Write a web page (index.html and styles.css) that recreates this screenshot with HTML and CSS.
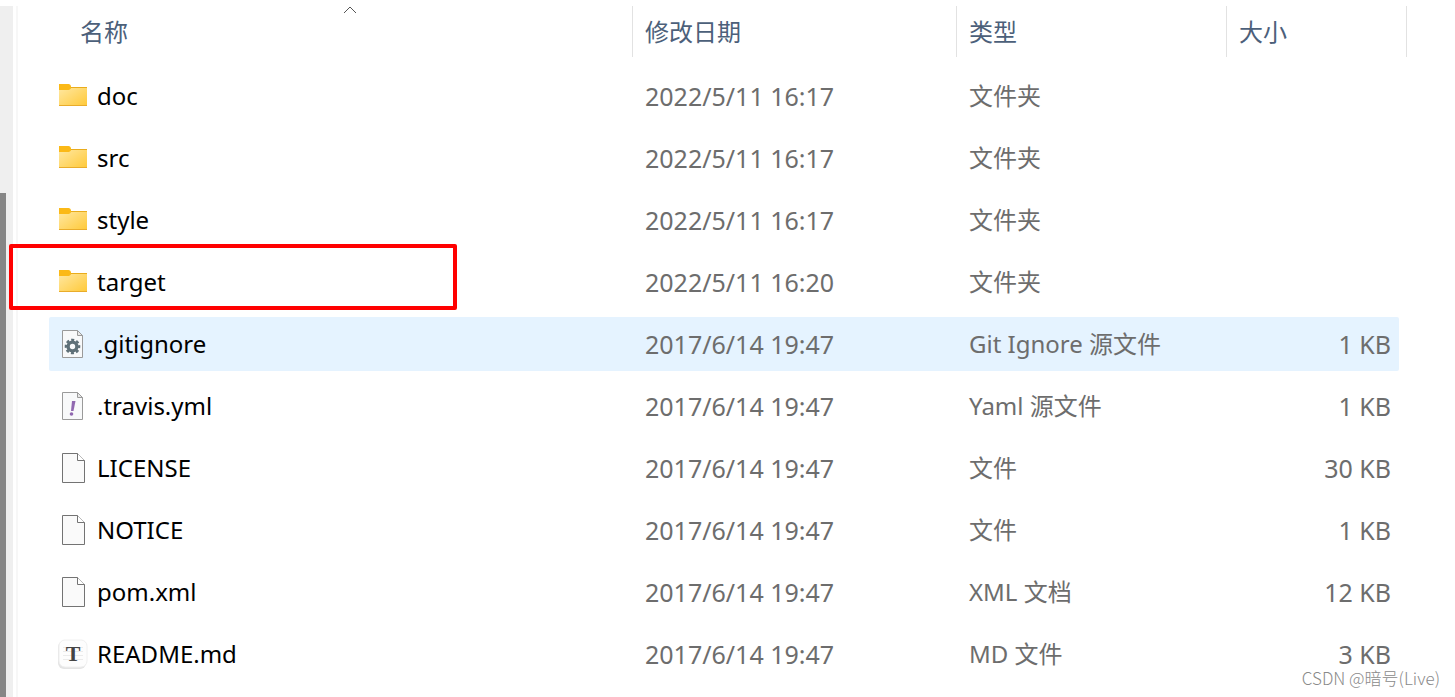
FILE: index.html
```html
<!DOCTYPE html>
<html lang="zh-CN">
<head>
  <meta charset="UTF-8" />
  <meta name="viewport" content="width=device-width, initial-scale=1" />
  <title>文件</title>
  <link rel="stylesheet" href="styles.css">
</head>
<body>

  <svg class="defs" aria-hidden="true">
    <defs>
      <linearGradient id="folder-fill" x1="0" y1="0" x2="1" y2="1">
        <stop offset="0" stop-color="#ffe8a3" />
        <stop offset="1" stop-color="#ffc938" />
      </linearGradient>
      <symbol id="icon-folder" viewBox="0 0 30 30">
        <path d="M1 3h9q1 0 3 3l-3 3H1z" fill="#fbb917" />
        <path d="M1 9h9l3-3h16v18q0 1-1 1H2q-1 0-1-1z" fill="url(#folder-fill)" />
        <path d="M1 8.500h9l3-2h16" fill="none" stroke="#e9ac1c" />
        <path d="M1 24.500h28" stroke="#e9ac2b" />
        <path d="M1 3h9q3 0 3 3t-3 3H1z" fill="#fbb917" />
      </symbol>
      <symbol id="icon-file" viewBox="0 0 30 30">
        <path d="M4.500.500h15l7 7v22h-22z" fill="#fafafa" stroke="#737373" />
        <path d="M19.500.500v7h7" fill="#fff" stroke="#737373" />
      </symbol>
      <symbol id="icon-source" viewBox="0 0 30 30">
        <path d="M4.500 1.500h15l5 5v22h-20z" fill="#f8f9fa" stroke="#9a9a9a" />
        <path d="M19.500 1.500v5h5z" fill="#e8e8e8" stroke="#9a9a9a" />
      </symbol>
    </defs>
  </svg>

  <div class="explorer">
    <div class="scrollbar"><div class="thumb"></div></div>

    <main class="files">
      <table>
        <thead>
          <tr>
            <th class="col-name">
              <div class="head">
                名称
                <svg class="sort" width="14" height="8" viewBox="0 0 14 8"><path d="M1 7l6-6 6 6" fill="none" stroke="#555" /></svg>
              </div>
            </th>
            <th class="col-date"><div class="head">修改日期</div></th>
            <th class="col-type"><div class="head">类型</div></th>
            <th class="col-size"><div class="head">大小</div></th>
          </tr>
        </thead>
        <tbody>
          <tr>
            <td><div class="name"><svg class="icon"><use href="#icon-folder" /></svg>doc</div></td>
            <td class="date">2022/5/11 16:17</td>
            <td>文件夹</td>
            <td class="size"></td>
          </tr>
          <tr>
            <td><div class="name"><svg class="icon"><use href="#icon-folder" /></svg>src</div></td>
            <td class="date">2022/5/11 16:17</td>
            <td>文件夹</td>
            <td class="size"></td>
          </tr>
          <tr>
            <td><div class="name"><svg class="icon"><use href="#icon-folder" /></svg>style</div></td>
            <td class="date">2022/5/11 16:17</td>
            <td>文件夹</td>
            <td class="size"></td>
          </tr>
          <tr>
            <td><div class="name"><svg class="icon"><use href="#icon-folder" /></svg>target<span class="mark"></span></div></td>
            <td class="date">2022/5/11 16:20</td>
            <td>文件夹</td>
            <td class="size"></td>
          </tr>
          <tr class="active">
            <td>
              <div class="name">
                <svg class="icon" viewBox="0 0 30 30">
                  <use href="#icon-source" />
                  <g stroke="#5f7078" fill="none">
                    <circle cx="14.500" cy="17.500" r="4.400" stroke-width="3.400" />
                    <circle cx="14.500" cy="17.500" r="6.600" stroke-width="2.400" stroke-dasharray="3 2.184" stroke-dashoffset="1.500" />
                  </g>
                </svg>.gitignore
              </div>
            </td>
            <td class="date">2017/6/14 19:47</td>
            <td>Git Ignore 源文件</td>
            <td class="size">1 KB</td>
          </tr>
          <tr>
            <td>
              <div class="name">
                <svg class="icon" viewBox="0 0 30 30">
                  <use href="#icon-source" />
                  <path d="M14 10h3.500l-2 10h-2.500z" fill="#9068b0" />
                  <circle cx="13.500" cy="23" r="1.800" fill="#9068b0" />
                </svg>.travis.yml
              </div>
            </td>
            <td class="date">2017/6/14 19:47</td>
            <td>Yaml 源文件</td>
            <td class="size">1 KB</td>
          </tr>
          <tr>
            <td><div class="name"><svg class="icon"><use href="#icon-file" /></svg>LICENSE</div></td>
            <td class="date">2017/6/14 19:47</td>
            <td>文件</td>
            <td class="size">30 KB</td>
          </tr>
          <tr>
            <td><div class="name"><svg class="icon"><use href="#icon-file" /></svg>NOTICE</div></td>
            <td class="date">2017/6/14 19:47</td>
            <td>文件</td>
            <td class="size">1 KB</td>
          </tr>
          <tr>
            <td><div class="name"><svg class="icon"><use href="#icon-file" /></svg>pom.xml</div></td>
            <td class="date">2017/6/14 19:47</td>
            <td>XML 文档</td>
            <td class="size">12 KB</td>
          </tr>
          <tr>
            <td>
              <div class="name">
                <svg class="icon" viewBox="0 0 30 30">
                  <rect x="0" y="2" width="28" height="28" rx="6" fill="#e4e4e4" />
                  <rect x="1" y="1" width="28" height="27" rx="6" fill="#fdfdfd" stroke="#f0f0f0" />
                  <path d="M5 8.500h20M5 12.500h20M5 16.500h20M5 20.500h20" stroke="#ebebeb" />
                  <text class="glyph" x="15" y="22" text-anchor="middle">T</text>
                </svg>README.md
              </div>
            </td>
            <td class="date">2017/6/14 19:47</td>
            <td>MD 文件</td>
            <td class="size">3 KB</td>
          </tr>
        </tbody>
      </table>
    </main>
  </div>

  <div class="watermark">CSDN @暗号(Live)</div>

</body>
</html>
```
FILE: styles.css
```css
body {
  margin: 0;
  background: #fff;
  font-family: "Noto Sans", "Noto Sans CJK SC", sans-serif;
  font-size: 24px;
  color: #6d6d6d;
  position: relative;
  height: 100vh;
  overflow: hidden;
}
.defs { position: absolute; width: 0; height: 0; }
.explorer {
  display: flex;
  height: 100%;
  box-sizing: border-box;
  padding-top: 6px;
}
.scrollbar {
  width: 13px;
  background: #efefef;
  margin-right: 3px;
  padding-top: 187px;
  box-sizing: border-box;
  flex: none;
}
.thumb { width: 6px; height: 100%; background: #868686; }
.files {
  flex: 1;
  border-left: 2px solid #f7f7f7;
  padding: 0 56px 0 31px;
}
table {
  width: 100%;
  table-layout: fixed;
  border-collapse: separate;
  border-spacing: 0 8px;
  margin-top: -8px;
}
th {
  height: 55px;
  padding: 0;
  vertical-align: top;
  text-align: left;
  font-weight: normal;
  color: #4c607a;
}
.col-date { width: 324px; }
.col-type { width: 270px; }
.col-size { width: 172px; }
.head {
  position: relative;
  height: 51px;
  line-height: 52px;
  padding-left: 12px;
  border-right: 1px solid #e2e2e2;
}
.col-name .head { margin-left: 19px; }
.col-size .head { margin-right: -8px; }
.sort { position: absolute; top: 0; left: 50%; margin-left: -7px; }
td {
  height: 54px;
  line-height: 54px;
  padding: 0 0 0 12px;
  white-space: nowrap;
}
td:first-child { padding-left: 9px; border-radius: 2px 0 0 2px; }
td:last-child { border-radius: 0 2px 2px 0; }
.name {
  position: relative;
  display: flex;
  align-items: center;
  gap: 9px;
  color: #000;
  height: 54px;
}
.date, .size { font-size: 25px; }
.icon { width: 30px; height: 30px; flex: none; }
.glyph { font: bold 22px "Liberation Serif", serif; fill: #444; }
td.size { text-align: right; padding-right: 8px; }
.active td { background: #e5f3ff; }
.mark {
  position: absolute;
  left: -49px;
  top: -11px;
  width: 448px;
  height: 66px;
  box-sizing: border-box;
  border: 4px solid #f00;
  border-radius: 2px;
}
.watermark {
  position: absolute;
  right: 15px;
  bottom: 8px;
  font: 300 17px/22px "Noto Sans CJK SC", sans-serif;
  color: #8a8a8a;
}
```
